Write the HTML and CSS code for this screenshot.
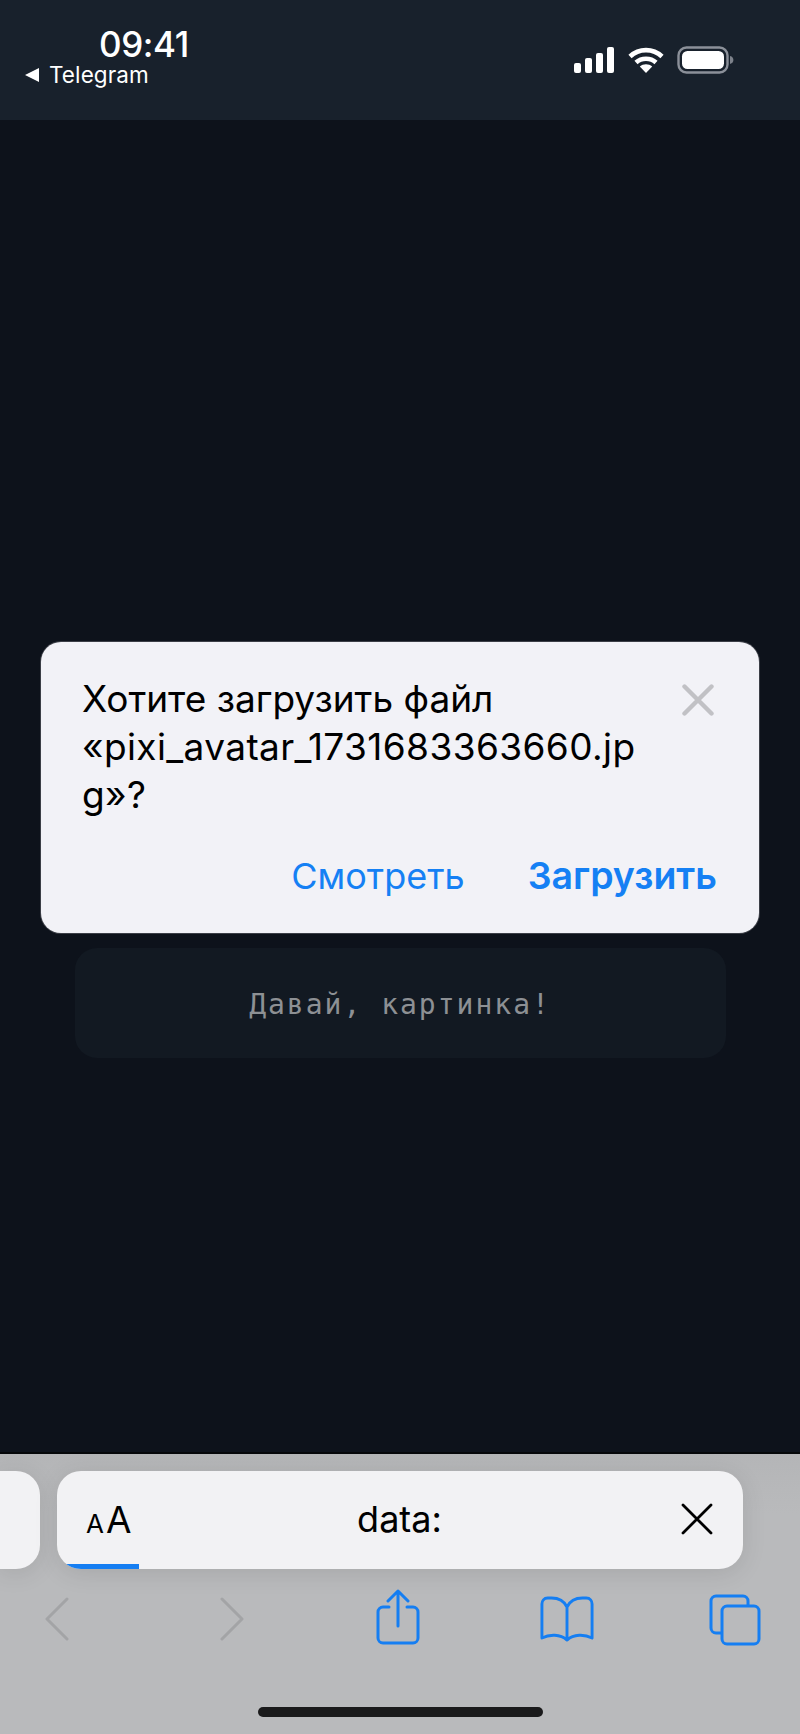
FILE: index.html
```html
<!DOCTYPE html>
<html lang="ru">
<head>
<meta charset="utf-8">
<title>Загрузка файла</title>
<link rel="stylesheet" href="styles.css">
</head>
<body>
<div class="phone">
  <header class="status">
    <div class="status-left">
      <div class="time">09:41</div>
      <div class="back-app"><span class="tri"></span><span>Telegram</span></div>
    </div>
    <div class="status-right">
      <svg class="signal" width="40" height="26" viewBox="0 0 40 26" fill="#fff">
        <rect x="0" y="16" width="7" height="10" rx="2"/>
        <rect x="11" y="11" width="7" height="15" rx="2"/>
        <rect x="22" y="6" width="7" height="20" rx="2"/>
        <rect x="33" y="0" width="7" height="26" rx="2"/>
      </svg>
      <svg class="wifi" width="36" height="26" viewBox="0 0 36 26" fill="none" stroke="#fff" stroke-width="4.6">
        <path d="M2 9.5C11 1 25 1 34 9.5"/>
        <path d="M8 15.5C13.5 10.5 22.500 10.5 28 15.5"/>
        <path d="M18 26l-6.2-6.4c3.4-3 9-3 12.4 0z" fill="#fff" stroke="none"/>
      </svg>
      <svg class="battery" width="57" height="28" viewBox="0 0 57 28">
        <rect x="1.5" y="1.5" width="49" height="25" rx="8" fill="none" stroke="#8b9099" stroke-width="2.4"/>
        <rect x="5" y="5" width="42" height="18" rx="5.5" fill="#fff"/>
        <path d="M53 10c2.4.6 3.4 2.2 3.4 4s-1 3.4-3.4 4z" fill="#7d828b"/>
      </svg>
    </div>
  </header>

  <main class="page">
    <section class="dialog">
      <div class="dialog-top">
        <p class="dialog-text">Хотите загрузить файл<br><span class="filename">«pixi_avatar_1731683363660.jp<br>g»?</span></p>
        <svg class="dialog-close" width="32" height="32" viewBox="0 0 32 32" stroke="#c1c1c5" stroke-width="4.4" stroke-linecap="round">
          <path d="M2.5 2.5l27 27M29.500 2.500l-27 27"/>
        </svg>
      </div>
      <div class="dialog-actions">
        <span class="action">Смотреть</span>
        <span class="action action-main">Загрузить</span>
      </div>
    </section>
    <div class="prompt"><span>Давай, картинка!</span></div>
  </main>

  <footer class="browser">
    <div class="tabs">
      <div class="tab-peek"></div>
      <div class="tab">
        <span class="aa"><span class="aa-small">A</span>A</span>
        <span class="url">data:</span>
        <svg class="stop" width="32" height="32" viewBox="0 0 32 32" stroke="#000" stroke-width="2.8" stroke-linecap="round">
          <path d="M2 2l28 28M30 2L2 30"/>
        </svg>
        <div class="progress"></div>
      </div>
    </div>
    <nav class="tools">
      <svg width="26" height="44" viewBox="0 0 26 44" fill="none" stroke="#a3a4a6" stroke-width="3" stroke-linecap="round" stroke-linejoin="round" class="tool-back">
        <path d="M23 2L3 22l20 20"/>
      </svg>
      <svg width="26" height="44" viewBox="0 0 26 44" fill="none" stroke="#a3a4a6" stroke-width="3" stroke-linecap="round" stroke-linejoin="round" class="tool-forward">
        <path d="M3 2l20 20L3 42"/>
      </svg>
      <svg width="44" height="56" viewBox="0 0 44 56" fill="none" stroke="#157ef2" stroke-width="3" stroke-linecap="round" stroke-linejoin="round" class="tool-share">
        <path d="M13 18H7a5 5 0 0 0-5 5v26a5 5 0 0 0 5 5h30a5 5 0 0 0 5-5V23a5 5 0 0 0-5-5h-6"/>
        <path d="M22 37V2M12 12L22 2l10 10"/>
      </svg>
      <svg width="54" height="46" viewBox="0 0 56 46" fill="none" stroke="#157ef2" stroke-width="3" stroke-linecap="round" stroke-linejoin="round" class="tool-book" preserveAspectRatio="none">
        <path d="M28 11C25 5 19 2 12 2H8C4 2 2 5 2 8v34c8-4 19-4 26 2 7-6 18-6 26-2V8c0-3-2-6-6-6h-4c-7 0-13 3-16 9zM28 11v33"/>
      </svg>
      <svg width="52" height="52" viewBox="0 0 52 52" fill="none" stroke="#157ef2" stroke-width="3" stroke-linejoin="round" class="tool-tabs">
        <path d="M13 39H7a5 5 0 0 1-5-5V7a5 5 0 0 1 5-5h27a5 5 0 0 1 5 5v5"/>
        <rect x="13" y="12" width="37" height="38" rx="5"/>
      </svg>
    </nav>
    <div class="home-row"><div class="home"></div></div>
  </footer>
</div>
</body>
</html>
```
FILE: styles.css
```css
* { box-sizing: border-box; }
html, body { margin: 0; padding: 0; }
body { width: 800px; height: 1734px; overflow: hidden; font-family: Inter, "Liberation Sans", sans-serif; background: #0d121b; }
.phone { display: flex; flex-direction: column; width: 800px; height: 1734px; }

.status { height: 120px; flex: none; background: #18212c; display: flex; justify-content: space-between; align-items: flex-start; padding: 0 66px 0 25px; color: #fff; }
.status-left { display: flex; flex-direction: column; padding-top: 25px; }
.time { font-size: 35px; line-height: 38px; font-weight: 500; margin-left: 74px; letter-spacing: -0.4px; }
.back-app { display: flex; align-items: center; gap: 10px; font-size: 22.500px; line-height: 24px; letter-spacing: 0.1px; }
.tri { width: 0; height: 0; border-style: solid; border-width: 7px 14px 7px 0; border-color: transparent #fff transparent transparent; }
.status-right { display: flex; align-items: flex-start; padding-top: 46px; }
.signal { margin-top: 1px; }
.wifi { margin: 1px 13px 0 14px; }

.page { flex: 1; background: #0d121b; padding: 522px 41px 0; border-bottom: 2px solid #050709; display: flex; flex-direction: column; align-items: center; }
.dialog { width: 718px; height: 291px; flex: none; background: #f2f2f7; border-radius: 20px; box-shadow: 0 0 0 1px rgba(150,150,155,.35); padding: 33px 42px 0 41px; color: #000; display: flex; flex-direction: column; }
.dialog-top { display: flex; justify-content: space-between; align-items: flex-start; }
.dialog-text { margin: 0; font-size: 37px; line-height: 48px; }
.filename { letter-spacing: 0.4px; }
.dialog-close { margin: 9px 3px 0 0; }
.dialog-actions { display: flex; justify-content: flex-end; gap: 63px; margin-top: 35px; line-height: 44px; color: #1580f4; }
.action { font-size: 36px; }
.action-main { font-size: 37.500px; font-weight: 600; }
.prompt { width: 651px; height: 110px; flex: none; margin-top: 15px; background: #121922; border-radius: 22px; display: flex; align-items: center; justify-content: center; font-family: "DejaVu Sans Mono", "Liberation Mono", monospace; font-size: 28px; letter-spacing: 2px; padding-top: 2px; color: #8d9094; }

.browser { height: 280px; flex: none; background: linear-gradient(#b4b5b7, #b9babc 60px, #b9babc); display: flex; flex-direction: column; }
.tabs { display: flex; gap: 17px; height: 98px; margin-top: 17px; padding-right: 57px; flex: none; }
.tab-peek { width: 40px; background: #f2f2f4; border-radius: 0 24px 24px 0; box-shadow: 0 4px 24px rgba(0,0,0,.1); }
.tab { flex: 1; position: relative; overflow: hidden; background: #f2f2f4; border-radius: 24px; display: grid; grid-template-columns: 1fr auto 1fr; align-items: center; padding: 0 30px 0 29px; box-shadow: 0 4px 24px rgba(0,0,0,.1); }
.aa { font-size: 37px; color: #000; line-height: 1; margin-bottom: 2px; }
.aa-small { font-size: 26px; margin-right: 2px; }
.url { font-size: 36px; line-height: 1; color: #000; margin-bottom: 2px; }
.stop { margin-bottom: 2px; justify-self: end; }
.progress { position: absolute; left: 0; bottom: 0; width: 82px; height: 5px; background: #157ef2; }

.tools { height: 138px; flex: none; display: flex; align-items: flex-start; padding-left: 44px; }
.tool-back { margin-top: 28px; }
.tool-forward { margin: 28px 0 0 149px; }
.tool-share { margin: 20px 0 0 131px; }
.tool-book { margin: 27px 0 0 120px; }
.tool-tabs { margin: 25px 0 0 115px; }

.home-row { display: flex; justify-content: center; }
.home { width: 285px; height: 10px; border-radius: 5px; background: #1a1a1b; }
```
